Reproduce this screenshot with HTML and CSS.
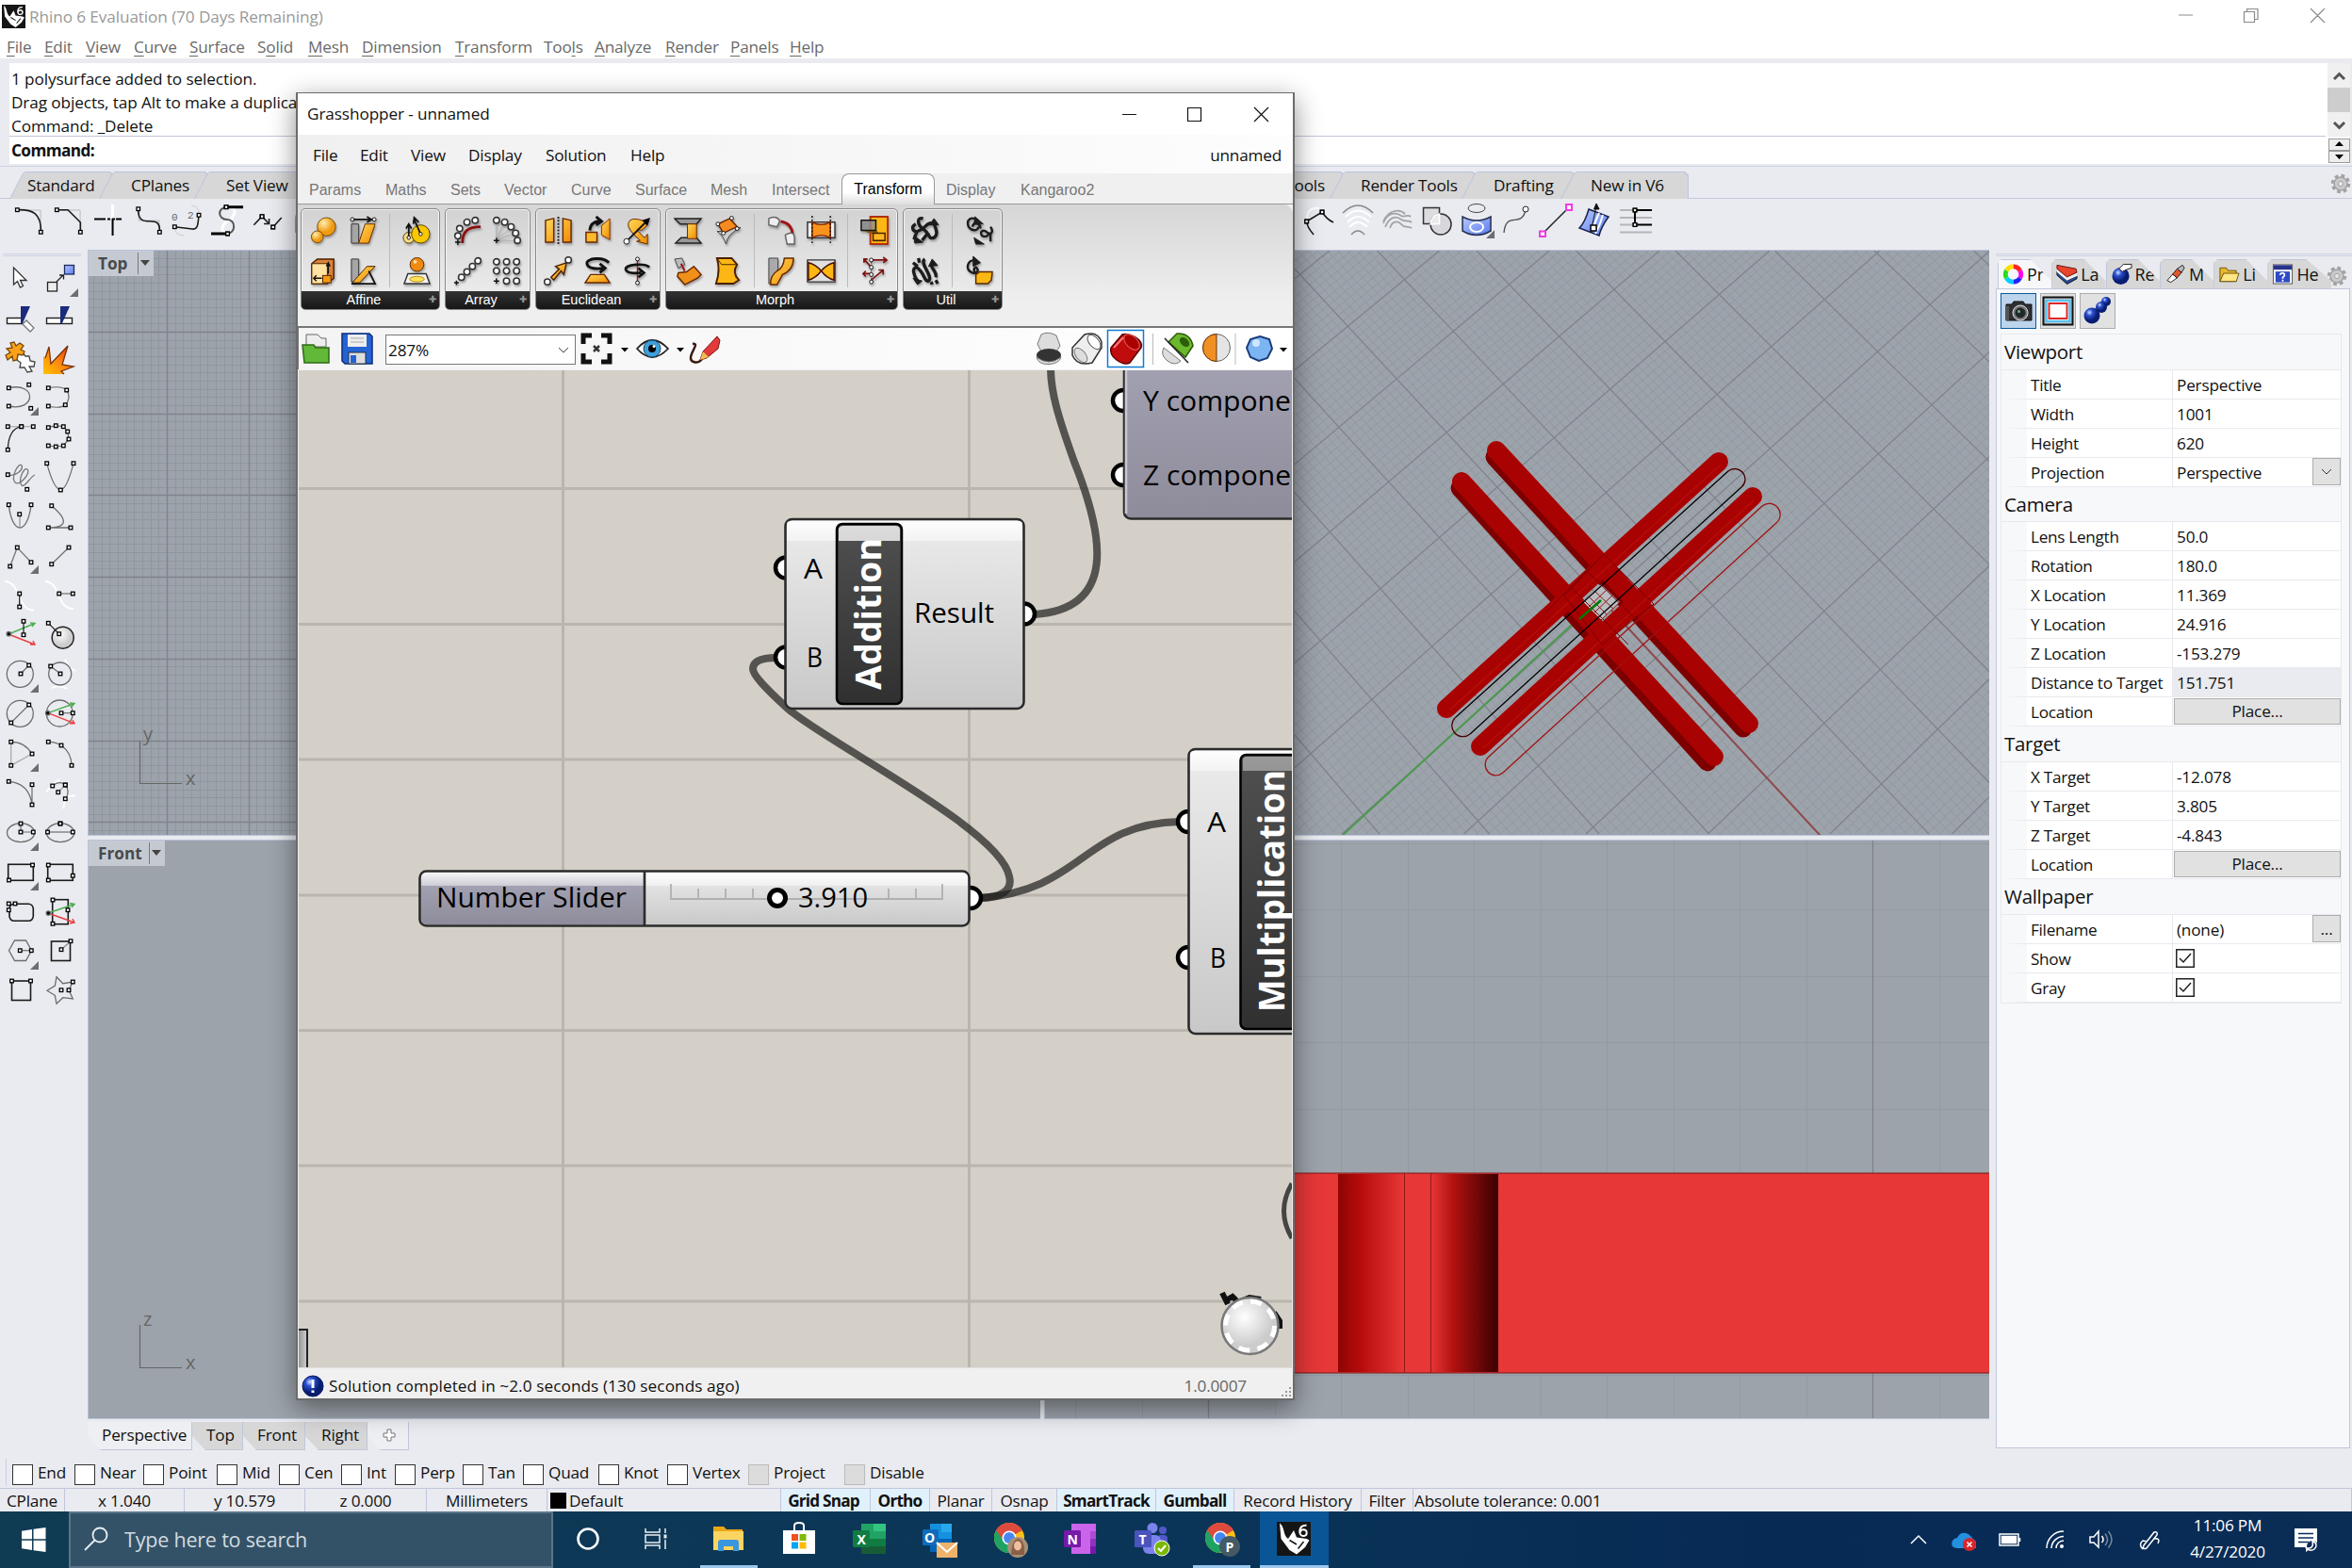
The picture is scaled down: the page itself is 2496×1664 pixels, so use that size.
FILE: index.html
```html
<!DOCTYPE html>
<html lang="en">
<head>
<meta charset="utf-8">
<title>Rhino 6 Evaluation</title>
<link rel="stylesheet" href="styles.css">
</head>
<body>
<svg class="defs" width="0" height="0">
  <defs>
    <marker id="n" markerUnits="userSpaceOnUse" markerWidth="6" markerHeight="6" refX="3" refY="3"><rect x="1.2" y="1.2" width="3.6" height="3.6" fill="#fff" stroke="#000" stroke-width="1.3"/></marker>
    <linearGradient id="silver" x2="0" y2="1"><stop offset="0" stop-color="#ececec"/><stop offset="1" stop-color="#c8c8c8"/></linearGradient>
    <linearGradient id="shine" x2="0" y2="1"><stop offset="0" stop-color="#fff" stop-opacity=".9"/><stop offset="1" stop-color="#fff" stop-opacity=".45"/></linearGradient>
    <linearGradient id="shineDark" x2="0" y2="1"><stop offset="0" stop-color="#fff" stop-opacity=".8"/><stop offset="1" stop-color="#fff" stop-opacity=".4"/></linearGradient>
    <linearGradient id="mauve" x2="0" y2="1"><stop offset="0" stop-color="#a9a8b8"/><stop offset="1" stop-color="#8e8c9b"/></linearGradient>
    <linearGradient id="black" x2="0" y2="1"><stop offset="0" stop-color="#505050"/><stop offset="1" stop-color="#303030"/></linearGradient>
    <linearGradient id="steel"><stop offset="0" stop-color="#777"/><stop offset="1" stop-color="#d0d0d0"/></linearGradient>
    <linearGradient id="gold" x2="1" y2="1"><stop offset="0" stop-color="#ffd75a"/><stop offset="1" stop-color="#f08c00"/></linearGradient>
    <radialGradient id="ballO" cx=".35" cy=".3"><stop offset="0" stop-color="#ffeeb0"/><stop offset="1" stop-color="#f09a10"/></radialGradient>
    <radialGradient id="ballB" cx=".35" cy=".3"><stop offset="0" stop-color="#cfe0ff"/><stop offset=".4" stop-color="#2c50d0"/><stop offset="1" stop-color="#081c70"/></radialGradient>
    <radialGradient id="ballW" cx=".4" cy=".35"><stop offset="0" stop-color="#fff"/><stop offset="1" stop-color="#ccc"/></radialGradient>
    <linearGradient id="blueG" x2="1" y2="1"><stop offset="0" stop-color="#b6c8ff"/><stop offset="1" stop-color="#5c7cec"/></linearGradient>
    <linearGradient id="fire" x1="1" y1="0" x2="0" y2="1"><stop offset="0" stop-color="#e02000"/><stop offset=".5" stop-color="#ff8410"/><stop offset="1" stop-color="#ffc400"/></linearGradient>
    <linearGradient id="cylA"><stop offset="0" stop-color="#8e0404"/><stop offset=".35" stop-color="#b80c0c"/><stop offset="1" stop-color="#e83737"/></linearGradient>
    <linearGradient id="cylB"><stop offset="0" stop-color="#e83737"/><stop offset=".35" stop-color="#b01010"/><stop offset="1" stop-color="#3a0000"/></linearGradient>
    <symbol id="rhino" viewBox="0 0 24 24"><rect width="24" height="24" fill="#151515"/><path d="M2 1C6 4 4 9 8 12L12 6L14 11L21 12L23 13L20 18L14 23L9 20L3 12Z" fill="#fff"/><path d="M9 13L14 16M15 19L19 14" stroke="#151515" fill="none"/><path d="M21 2.500C15 2 15 10 18.500 10C22 10 22 5.500 18.500 5.500Q17 5.500 16.500 7.500" fill="none" stroke="#fff" stroke-width="1.300"/></symbol>
    <symbol id="fly" viewBox="0 0 42 42"><path d="M40 32V41H31Z" fill="#6e6e72"/></symbol>
    <symbol id="gear" viewBox="0 0 22 22"><circle cx="11" cy="11" r="8.500" fill="none" stroke="#a2a2a4" stroke-width="3.500" stroke-dasharray="3.700 3"/><circle cx="11" cy="11" r="7" fill="#c9c9ca" stroke="#a2a2a4" stroke-width="1.500"/><circle cx="11" cy="11" r="2.500" fill="#eaebf0" stroke="#a2a2a4"/></symbol>
    <symbol id="chrome" viewBox="0 0 36 36"><circle cx="18" cy="18" r="17" fill="#fbc116"/><path d="M18 18L3.300 9.500A17 17 0 0 1 32.700 9.500Z" fill="#dd4b3e"/><path d="M18 18L3.300 9.500A17 17 0 0 0 18 35L25 22Z" fill="#1ea362"/><path d="M3.300 9.500L11 20L18 10H32.700A17 17 0 0 0 3.300 9.500" fill="#dd4b3e"/><circle cx="18" cy="18" r="8" fill="#fff"/><circle cx="18" cy="18" r="6.300" fill="#4688f1"/></symbol>
  </defs>
</svg>

<header class="titlebar">
  <div class="caption">
    <svg class="app" width="25" height="25"><use href="#rhino"/></svg><span>Rhino 6 Evaluation (70 Days Remaining)</span>
    <svg class="winbtns" width="190" height="34" fill="none" stroke="#8b8b8b" stroke-width="1.200"><path d="M6 16H21M75.500 12.500H86.500V23.500H75.500ZM78.500 12.500V9.500H90V20.500H86.500M146 9L161 24M161 9L146 24"/></svg>
  </div>
  <nav class="menu">
    <span><u>F</u>ile</span><span><u>E</u>dit</span><span><u>V</u>iew</span><span><u>C</u>urve</span><span><u>S</u>urface</span><span>S<u>o</u>lid</span><span><u>M</u>esh</span><span><u>D</u>imension</span><span><u>T</u>ransform</span><span>Too<u>l</u>s</span><span><u>A</u>nalyze</span><span><u>R</u>ender</span><span><u>P</u>anels</span><span><u>H</u>elp</span>
  </nav>
</header>

<section class="command">
  <div class="history">1 polysurface added to selection.<br>Drag objects, tap Alt to make a duplicate<br>Command: _Delete</div>
  <div class="prompt">Command:</div>
  <svg class="scroll" width="26" height="107"><rect x="2" width="24" height="78" fill="#f0f0f0"/><rect x="2" y="26" width="24" height="26" fill="#cdcdcd"/><path d="M9 17L14.500 11.500L20 17M9 63L14.500 68.500L20 63" fill="none" stroke="#555" stroke-width="3"/><rect x="3.500" y="80.500" width="22" height="12" fill="#eee" stroke="#999"/><rect x="3.500" y="93.500" width="22" height="12" fill="#eee" stroke="#999"/><path d="M10 88L14.500 83L19 88ZM10 97L14.500 102L19 97Z"/></svg>
</section>

<section class="ribbon">
  <div class="rtabs">
    <span class="rt r1"><b>Standard</b></span><span class="rt r2"><b>CPlanes</b></span><span class="rt r3"><b>Set View</b></span><span class="rfill"></span><span class="rt r4"><b>Mesh Tools</b></span><span class="rt r5"><b>Render Tools</b></span><span class="rt r6"><b>Drafting</b></span><span class="rt r7"><b>New in V6</b></span>
    <svg class="gear" width="22" height="22"><use href="#gear"/></svg>
  </div>
  <div class="rtools">
    <svg viewBox="0 0 42 44"><path d="M9 12H34V35" stroke="#bbb"/><path class="nd k" d="M9.300 11.700C25 11 35 15 34.300 35.300"/></svg>
    <svg viewBox="0 0 42 44"><path d="M9 12H34V35" stroke="#bbb"/><path class="nd ends k" d="M9.300 11.700L21 11.700L34.300 25V35.300"/></svg>
    <svg viewBox="0 0 42 44"><path d="M26.500 6V21" stroke="#fff" stroke-width="3"/><path d="M7 21.500H16M30 21.500H36M26.500 21V39" stroke="#000" stroke-width="2"/><path d="M16 21.500H30" stroke="#000" stroke-width="2" stroke-dasharray="3 2"/></svg>
    <svg viewBox="0 0 42 44"><path d="M12 11V23H34V35" stroke="#bbb"/><path class="nd k" d="M11.700 10.700C11 36 36 12 34.300 35.300"/></svg>
    <svg viewBox="0 0 42 44"><path d="M26 7Q35 8 34 17M8 30Q8 38 18 39" stroke="#ccc"/><path class="nd ends k" d="M8.300 29.700L27 32C33 33 33 27 34 17.300"/><text x="5" y="23">0</text><text x="22" y="21">2</text></svg>
    <svg viewBox="0 0 42 44"><path d="M22 9C35 9 29 18 26 22C14 26 15 37 22 37" stroke="#fff" stroke-width="3"/><path d="M22 9C11 9 12 22 22 22S31 37 22 37" stroke="#555" stroke-width="2"/><path d="M22 8.700H39M5 37H22" stroke="#000" stroke-width="3"/><path class="nd" d="M21 8.700L21 8.700M22.500 37L22.500 37"/></svg>
    <svg viewBox="0 0 42 44"><path class="k" d="M7.300 27.700L16 18.700L23 26"/><path class="k" d="M27.700 30L36.700 20M23.500 21V26.500H18"/><path class="nd" d="M16 18.700L16 18.700M27.700 30L27.700 30"/></svg>
    <svg viewBox="0 0 42 44"><path d="M10 36V22C10 14 14 10 22 10" stroke="#999" stroke-width="2"/></svg>
    <i class="rgap"></i>
    <svg viewBox="0 0 42 44"><path d="M9 24Q8 8 22 10" stroke="#fff" stroke-width="2"/><path class="k" d="M16 38Q9 30 8.600 24L25 14Q30 22 37 25"/><path class="nd" d="M8.600 24L8.600 24M25 14L25 14"/></svg>
    <svg viewBox="0 0 42 44"><path d="M8 19Q21 6 35 19M10 25Q21 13 33 25M12 30Q21 20 31 30" stroke="#fff" stroke-width="2"/><path d="M5 15Q21 -1 37 15M14 38Q21 30 28 38" stroke="#888" stroke-width="1.600"/></svg>
    <svg viewBox="0 0 42 44"><path d="M6 26C10 14 20 14 25 18C29 20 32 16 35 19M8 30C12 20 19 17 25 22C29 25 33 22 36 25M13 31C15 24 21 22 26 28C30 31 33 29 36 31M6 24C11 12 23 10 29 16" stroke="#a3a3a5" stroke-width="1.800"/></svg>
    <svg viewBox="0 0 42 44"><rect x="6.500" y="9.500" width="17" height="17" fill="#dcdce0" stroke="#333" stroke-width="1.500"/><circle cx="25" cy="27" r="11" fill="#d8d8dc" stroke="#333" stroke-width="1.500"/><path d="M14 27A11 11 0 0 1 23.500 16V26.500Z" fill="#eceaea" stroke="#fff" stroke-width="1.500"/></svg>
    <svg viewBox="0 0 42 44"><ellipse cx="21" cy="10" rx="9" ry="4.500" stroke="#444"/><path d="M6 19Q21 27 36 19V34Q21 43 6 34Z" fill="url(#blueG)" stroke="#24304f" stroke-width="1.500"/><ellipse cx="21" cy="30" rx="7" ry="5" stroke="#fff" stroke-width="2"/><path d="M40 33V42H31Z" fill="#6e6e72"/></svg>
    <svg viewBox="0 0 42 44"><path d="M8 36C10 12 26 32 31 12" stroke="#555" stroke-width="1.400"/><circle cx="31" cy="11" r="3" fill="#fff" stroke="#222"/></svg>
    <svg viewBox="0 0 42 44"><path d="M7 37L35 9" stroke="#222" stroke-width="1.500"/><path d="M4 34.500H10V40H4ZM32 6H38V12H32Z" fill="#fff" stroke="#f038e8" stroke-width="2"/></svg>
    <svg viewBox="0 0 42 44"><path d="M14 11L35 19Q27 30 25 39L4 31Q10 25 14 11Z" fill="url(#blueG)" stroke="#161e4a" stroke-width="1.500"/><path d="M25 15Q20 26 18 34M29 17Q26 28 21 37" stroke="#fff" stroke-width="2"/><path d="M22 8L17 31M22 5L19.500 11H25Z" stroke="#111" fill="#111"/><rect x="16" y="28" width="6" height="6" fill="#fff" stroke="#000" stroke-width="1.500"/></svg>
    <svg viewBox="0 0 42 44"><path d="M4 12H20M4 20H38M4 27.500H20M4 35.500H38" stroke="#b5b5b8" stroke-width="2"/><path d="M38 12H20V27.500H38" stroke="#000" stroke-width="2"/><path class="nd" d="M20 12L20 12M20 27.500L20 27.500"/></svg>
  </div>
</section>

<main class="work">
  <aside class="tools">
    <svg viewBox="0 0 42 42"><path d="M13.500 10V28L17.500 24.500L20.500 31L23.500 29.500L20.500 23.500H27Z" fill="#fff" stroke="#333" stroke-width="1.300"/></svg>
    <svg viewBox="0 0 42 42"><rect x="7.500" y="25.500" width="10" height="9.500" fill="#eee" stroke="#222"/><rect x="25.500" y="7.500" width="10" height="9.500" fill="url(#blueG)" stroke="#1c2c60"/><path d="M17 25L24 18M20 18H24.500V22.500" stroke="#222"/><use href="#fly"/></svg>
    <svg viewBox="0 0 42 42"><rect x="6.500" y="21.500" width="16" height="6" fill="#fff" stroke="#222" stroke-width="1.400"/><path d="M27 24L35 32L31 36L23 28Z" fill="#fff" stroke="#777"/><path d="M21 9H31L23 27H21Z" fill="#1a2a7c" stroke="none"/></svg>
    <svg viewBox="0 0 42 42"><rect x="6.500" y="21.500" width="27" height="6" fill="#fff" stroke="#222" stroke-width="1.400"/><path d="M21 9H31L23 27H21Z" fill="#1a2a7c" stroke="none"/></svg>
    <svg viewBox="0 0 42 42"><path d="M18 18L23 16L26 20L30 20L31 25L36 26L35 31L30 31L33 36L28 37L25 32L20 32L21 27L17 24Z" fill="#fff" stroke="#444" stroke-width="1.300"/><path d="M10 6L14 5L16 9L20 6L24 9L21 13L25 15L23 19L18 18L17 24L13 25L12 20L7 24L5 19L10 16L6 12L12 11Z" fill="#f9a21a" stroke="#7a4a08" stroke-width="1.300"/></svg>
    <svg viewBox="0 0 42 42"><path d="M3 39V20L5 22L9 10L11 28L29 9L23 29L35 31L22 36L25 39Z" fill="url(#fire)" stroke="none"/><path d="M5 22L9 10L11 28L29 9L23 29L35 31L22 36L25 39" stroke="#7a3210"/></svg>
    <svg viewBox="0 0 42 42"><path d="M8.300 11.700C38 5 38 37 8.300 31"/><path class="nd o" d="M8.300 11.700L29.700 8.300L31.700 33.300L8.300 31"/><use href="#fly"/></svg>
    <svg viewBox="0 0 42 42"><path class="nd" d="M8.300 11.700Q22 9 27.700 14Q33 22 26.300 29.700Q21 34 8.300 31"/></svg>
    <svg viewBox="0 0 42 42"><path class="nd" d="M7.300 10.700L21.700 10.700L34.300 10.700" stroke="#aaa"/><path class="nd k" d="M7.300 35.300Q8 13 21.700 10.700"/></svg>
    <svg viewBox="0 0 42 42"><path class="nd" d="M8.300 11.700L16.300 9.700L24.300 10.700L28.700 16L30 24L24.300 31L16.300 32L8.300 31"/></svg>
    <svg viewBox="0 0 42 42"><path d="M8 20C16 22 24 14 22 10C19 6 10 22 15 28C20 32 32 18 28 14C24 11 18 26 22 31C25 34 31 22 36 20" stroke="#777"/><path class="nd o" d="M7.300 19.700L27.700 35.300"/></svg>
    <svg viewBox="0 0 42 42"><path class="nd" d="M6.700 7.700Q14 35 21.300 36Q28 35 35 7.700"/></svg>
    <svg viewBox="0 0 42 42"><path d="M8.300 10C12 42 28 42 32 10"/><path d="M20 20V35" stroke="#999"/><path class="nd o" d="M8.300 9.700L32 9.700L19.700 19.700"/></svg>
    <svg viewBox="0 0 42 42"><path d="M11.700 10.700C30 26 28 34 8.300 34H32"/><path class="nd o" d="M11.700 10.700L8.300 34L32 34"/></svg>
    <svg viewBox="0 0 42 42"><path class="nd" d="M9.700 33L17.300 13L32 28.700"/><use href="#fly"/></svg>
    <svg viewBox="0 0 42 42"><path class="nd" d="M11.700 30.700L30 13"/></svg>
    <svg viewBox="0 0 42 42"><path d="M4 7C22 8 16 37 35 37.700" stroke="#fff" stroke-width="2"/><path class="nd k" d="M19.700 20V34"/></svg>
    <svg viewBox="0 0 42 42"><path d="M5 7C22 8 16 36 35 36" stroke="#fff" stroke-width="2"/><path class="nd" d="M19.700 20H34.300"/></svg>
    <svg viewBox="0 0 42 42"><path class="g" d="M8 21L36 9.500M31 9L36 9.500L33 13"/><path class="r" d="M8 21L36 32M31 32L36 32L34 28"/><circle cx="8.300" cy="20.700" r="2.200" fill="#000"/><path class="nd k" d="M24 7.300V21.700"/></svg>
    <svg viewBox="0 0 42 42"><circle cx="23.700" cy="24.700" r="11.500" fill="url(#ballW)" stroke="#222" stroke-width="1.500"/><path class="nd k" d="M8.300 9.300L19.700 20.700"/></svg>
    <svg viewBox="0 0 42 42"><circle cx="20.300" cy="21.300" r="14"/><path class="nd" d="M21 21L29.700 12"/><use href="#fly"/></svg>
    <svg viewBox="0 0 42 42"><path d="M26 6L30 14L37 18M12 36Q20 32 28 37" stroke="#fff" stroke-width="2"/><circle cx="20.700" cy="21" r="12"/><path class="nd" d="M21 21L10.700 13"/></svg>
    <svg viewBox="0 0 42 42"><circle cx="20.300" cy="21.300" r="14"/><path class="nd" d="M10.700 31L29.700 12"/></svg>
    <svg viewBox="0 0 42 42"><circle cx="20.300" cy="21" r="14"/><path class="g" d="M8 20.700L36 10.500M31 10L36 10.500L33 14"/><path class="r" d="M8 20.700L36 31.700M31 32L36 31.700L34 28"/><circle cx="7.700" cy="20.700" r="2.200" fill="#000"/><path class="nd" d="M22 20.700H34.300"/></svg>
    <svg viewBox="0 0 42 42"><path d="M10.700 9.300V34.300L33 22" stroke="#aaa"/><path d="M10.700 9.300Q25 9 33 22"/><path class="nd o" d="M10.700 9.300L33 22L10.700 34.300"/><use href="#fly"/></svg>
    <svg viewBox="0 0 42 42"><path class="nd" d="M8.300 9.300Q16 9 22 13Q33 21 33 34.300"/></svg>
    <svg viewBox="0 0 42 42"><path class="nd" d="M8.300 9.300Q30 11 33 34V12.700"/></svg>
    <svg viewBox="0 0 42 42"><path d="M6 20L20 7M24 38L27 26L37 24" stroke="#fff" stroke-width="2"/><path class="nd" d="M12.700 14Q20 8 26.300 13Q32 20 26.300 27.700"/><path class="nd" d="M26.300 13L18.700 20.700" stroke="#999"/></svg>
    <svg viewBox="0 0 42 42"><ellipse cx="21" cy="21.700" rx="14.500" ry="10"/><path class="nd" d="M21 12V21L34.300 21"/><use href="#fly"/></svg>
    <svg viewBox="0 0 42 42"><ellipse cx="21" cy="21.700" rx="14.500" ry="10"/><path class="nd" d="M7.500 21H34.300"/><path class="nd" d="M21 12L21 12"/></svg>
    <svg viewBox="0 0 42 42"><rect class="k" x="7.700" y="13.300" width="26.600" height="17"/><path class="nd o" d="M33.500 14L8.500 30"/><use href="#fly"/></svg>
    <svg viewBox="0 0 42 42"><rect class="k" x="7.700" y="13.300" width="26.600" height="17"/><path class="nd o" d="M8.300 14V30L34.300 25.300"/></svg>
    <svg viewBox="0 0 42 42"><rect class="k" x="9" y="13.300" width="25.300" height="18" rx="5"/><path class="nd o" d="M15 13L8.300 13L8.300 19.700"/></svg>
    <svg viewBox="0 0 42 42"><rect class="k" x="12.700" y="8.700" width="16.600" height="26"/><path class="g" d="M8 23L36 13.500M31 12.500L36 13.500L33 17"/><path class="r" d="M8 23L36 33M31 34L36 33L34 29"/><circle cx="8.300" cy="23" r="2.200" fill="#000"/><path class="nd o" d="M13 9L29 19.700L13 34.300"/></svg>
    <svg viewBox="0 0 42 42"><path d="M8.500 20.700L14.500 10H26.500L32.500 20.700L26.500 31.500H14.500Z"/><path class="nd" d="M20.300 20.700H32.300"/><use href="#fly"/></svg>
    <svg viewBox="0 0 42 42"><rect class="k" x="11.500" y="11" width="20" height="20.500"/><path class="nd" d="M22 19.700L32 10.700" stroke="#888"/></svg>
    <svg viewBox="0 0 42 42"><rect class="k" x="11.500" y="11" width="20" height="20.500"/><path class="nd o" d="M11.500 11H31.500"/></svg>
    <svg viewBox="0 0 42 42"><path d="M7 21.300L15.300 16L17 6.700L23.700 13.700L34.300 12L30 20.700L34.300 30L23.700 28.700L17 35.300L15.300 26.300Z"/><path class="nd o" d="M22 20.700L30 20.700L34.300 12"/></svg>
  </aside>

  <div class="center">
    <div class="views">
      <section class="view">
        <svg width="1010" height="621"><path class="mn" id="topMinor"/><path class="mj" id="topMajor"/><path d="M54.500 520V565.500H99" class="ax"/><text class="axt" x="58" y="520">y</text><text class="axt" x="103" y="567">x</text></svg>
        <div class="vlabel">Top<i></i></div>
      </section>
      <section class="view world">
        <svg viewBox="1108 266 1003 621" width="1003" height="621">
          <path class="mn p" id="perMinor"/><path class="mj" id="perMajor"/>
          <path d="M1424 887L1680 652" stroke="#4a9a4a" stroke-width="2"/><path d="M1932 887L1705 642" stroke="#8f4a4d" stroke-width="2"/>
          <g stroke-linecap="round" fill="none">
            <g stroke="#7d0000" stroke-width="19"><path d="M1586 485L1850 773"/><path d="M1549 518L1812 809"/></g>
            <g stroke="#a90202" stroke-width="20"><path d="M1588 478L1856 768"/><path d="M1551 511L1819 803"/><path d="M1824 490L1535 752"/><path d="M1860 527L1571 792"/></g>
            <path d="M1825 494L1539 753M1861 531L1575 793" stroke="#c0140e" stroke-width="2" opacity=".5"/>
          </g>
          <path d="M1699 620L1719 639L1699 658L1680 639Z" fill="#b9bcc0"/>
          <path d="M1680 639L1699 658M1686 633L1705 652M1692 627L1712 646M1719 639L1699 658M1711 632L1692 650M1705 626L1686 644" stroke="#8e1515"/>
          <path d="M1660 632L1702 588L1755 641L1700 684ZM1668 624L1728 684M1684 606L1745 666M1693 597L1640 650" stroke="#7d0000" fill="none"/>
          <path d="M1834 500L1545 761M1848 517L1560 779" stroke="#000" stroke-width="1.300"/><path d="M1834 500A10.500 10.500 0 0 1 1848 517M1545 761A10.500 10.500 0 0 0 1560 779" fill="none" stroke="#400" stroke-width="1.300"/>
          <path d="M1870 537L1580 803A10.500 10.500 0 0 0 1595 820L1885 555A10.500 10.500 0 0 0 1870 537Z" fill="none" stroke="#a01010" stroke-width="1.300"/>
          <path d="M1676 657L1699 637" stroke="#007800" stroke-width="2.500"/>
        </svg>
      </section>
      <section class="view"><div class="vlabel front">Front<i></i></div>
        <svg width="1010" height="614"><path d="M54.500 514V559.500H99" class="ax"/><text class="axt" x="58" y="515">z</text><text class="axt" x="103" y="561">x</text></svg>
      </section>
      <section class="view world">
        <svg viewBox="1108 892 1003 614" width="1003" height="614">
          <path class="mn f" id="frMinor"/><path class="mj" id="frMajor"/>
          <rect x="1300" y="1245" width="815" height="212" fill="#e83737" stroke="#7a1414"/>
          <rect x="1420" y="1246" width="70" height="210" fill="url(#cylA)"/><rect x="1518" y="1246" width="72" height="210" fill="url(#cylB)"/>
          <path d="M1490.500 1245V1457M1518.500 1245V1457" stroke="#901818"/>
        </svg>
      </section>
    </div>
    <div class="vtabs"><span class="v1 on">Perspective</span><span class="v2">Top</span><span class="v3">Front</span><span class="v4">Right</span><span class="v5 on"><svg width="14" height="14"><path d="M5 1H9V5H13V9H9V13H5V9H1V5H5Z" fill="#fff" stroke="#777"/></svg></span></div>
  </div>

  <aside class="panel">
    <div class="ptabs">
      <span class="on"><svg viewBox="0 0 24 24"><g fill="none" stroke-width="5"><path d="M12 3.500A8.500 8.500 0 0 1 19.400 7.800" stroke="#f22"/><path d="M19.400 7.800A8.500 8.500 0 0 1 19.400 16.300" stroke="#f0e" /><path d="M19.400 16.300A8.500 8.500 0 0 1 12 20.500" stroke="#22f"/><path d="M12 20.500A8.500 8.500 0 0 1 4.600 16.300" stroke="#0cf"/><path d="M4.600 16.300A8.500 8.500 0 0 1 4.600 7.800" stroke="#2d2"/><path d="M4.600 7.800A8.500 8.500 0 0 1 12 3.500" stroke="#fd0"/></g></svg>Pr</span>
      <span><svg viewBox="0 0 24 24"><path d="M1 9L12 19L23 14V17L12 23L1 13Z" fill="#234a9c" stroke="#111"/><path d="M1 6L12 15L23 11V14L12 19L1 10Z" fill="#eee"/><path d="M1 2L22 6L23 10L12 15L1 6Z" fill="#e8452c" stroke="#611"/></svg>La</span>
      <span><svg viewBox="0 0 24 24"><circle cx="11" cy="14" r="9.500" fill="url(#ballB)"/><path d="M9 6L14 1H23V5L17 7L13 9Z" fill="#fff" stroke="#222"/></svg>Re</span>
      <span><svg viewBox="0 0 24 24"><path d="M3 19L9 12L14 16L7 21Z" fill="#fff" stroke="#222"/><path d="M9 12L14 6L19 10L14 16Z" fill="#e4572c" stroke="#222"/><path d="M14 6L20 2L22 5L19 10Z" fill="#bbb" stroke="#222"/></svg>M</span>
      <span><svg viewBox="0 0 24 24"><path d="M2 20V5H9L11 8H20V20Z" fill="#e8b928" stroke="#6b5210"/><path d="M2 20L6 11H23L20 20Z" fill="#ffe784" stroke="#6b5210"/></svg>Li</span>
      <span><svg viewBox="0 0 24 24"><rect x="1.500" y="1.500" width="21" height="21" fill="#fff" stroke="#555"/><rect x="2" y="2" width="20" height="5" fill="#26348c"/><rect x="4" y="9" width="16" height="12" fill="#2d4bc4"/><path d="M9 13Q9.500 10 13 11Q15.500 13 12 15.500V17M12 18V20" stroke="#fff" stroke-width="1.800" fill="none"/></svg>He</span>
      <svg class="gear" width="22" height="22"><use href="#gear"/></svg>
    </div>
    <div class="pbody">
      <div class="picons">
        <span class="sel"><svg viewBox="0 0 34 34"><path d="M4 10H10L12 7H22L24 10H31V27H4Z" fill="#2c2f33" stroke="#111"/><path d="M3 12H7V27H3Z" fill="#555"/><circle cx="19" cy="19" r="8" fill="#777" stroke="#ddd"/><circle cx="19" cy="19" r="5" fill="#1c2a2c" stroke="#222"/><circle cx="17.500" cy="17.500" r="1.500" fill="#7fb27f"/></svg></span>
        <span><svg viewBox="0 0 34 34"><rect x="1.500" y="2.500" width="31" height="29" fill="#ccc" stroke="#111" stroke-width="2"/><rect x="4.500" y="6" width="25" height="22" fill="#fff" stroke="#5cc0ee" stroke-width="2.500"/><rect x="7.500" y="9" width="19" height="16" fill="#fff" stroke="#e02828" stroke-width="2"/></svg></span>
        <span><svg viewBox="0 0 34 34"><circle cx="26" cy="7" r="5" fill="url(#ballB)"/><circle cx="21" cy="13" r="6" fill="url(#ballB)"/><circle cx="11" cy="22" r="8.500" fill="url(#ballB)"/></svg></span>
      </div>
      <div class="props">
        <h3>Viewport</h3>
        <dl><dt>Title</dt><dd>Perspective</dd><dt>Width</dt><dd>1001</dd><dt>Height</dt><dd>620</dd><dt>Projection</dt><dd>Perspective<span class="drop"><svg width="14" height="9" fill="none" stroke="#333"><path d="M2 2L7 7L12 2"/></svg></span></dd></dl>
        <h3>Camera</h3>
        <dl><dt>Lens Length</dt><dd>50.0</dd><dt>Rotation</dt><dd>180.0</dd><dt>X Location</dt><dd>11.369</dd><dt>Y Location</dt><dd>24.916</dd><dt>Z Location</dt><dd>-153.279</dd><dt>Distance to Target</dt><dd class="ro">151.751</dd><dt>Location</dt><dd><span class="btn">Place...</span></dd></dl>
        <h3>Target</h3>
        <dl><dt>X Target</dt><dd>-12.078</dd><dt>Y Target</dt><dd>3.805</dd><dt>Z Target</dt><dd>-4.843</dd><dt>Location</dt><dd><span class="btn">Place...</span></dd></dl>
        <h3>Wallpaper</h3>
        <dl><dt>Filename</dt><dd>(none)<span class="drop">...</span></dd><dt>Show</dt><dd><svg class="chk" width="20" height="20"><rect x=".75" y=".75" width="18.500" height="18.500" fill="#fff" stroke="#222" stroke-width="1.500"/><path d="M4 10L8 14L16 5" fill="none" stroke="#222" stroke-width="1.500"/></svg></dd><dt>Gray</dt><dd><svg class="chk" width="20" height="20"><rect x=".75" y=".75" width="18.500" height="18.500" fill="#fff" stroke="#222" stroke-width="1.500"/><path d="M4 10L8 14L16 5" fill="none" stroke="#222" stroke-width="1.500"/></svg></dd></dl>
      </div>
    </div>
  </aside>
</main>

<section class="osnap"><span>End</span><span>Near</span><span>Point</span><span>Mid</span><span>Cen</span><span>Int</span><span>Perp</span><span>Tan</span><span>Quad</span><span>Knot</span><span>Vertex</span><span class="off">Project</span><span class="off">Disable</span></section>

<section class="status"><span>CPlane</span><span>x 1.040</span><span>y 10.579</span><span>z 0.000</span><span>Millimeters</span><span class="layer">Default</span><b>Grid Snap</b><b>Ortho</b><span>Planar</span><span>Osnap</span><b>SmartTrack</b><b>Gumball</b><span>Record History</span><span>Filter</span><span class="last">Absolute tolerance: 0.001</span></section>

<footer class="taskbar">
  <div class="start"><svg width="26" height="26" fill="#fff"><path d="M0 3.700L11 2V12.300H0ZM12.500 1.800L25.500 0V12.300H12.500ZM0 13.700H11V24L0 22.300ZM12.500 13.700H25.500V26L12.500 24.200Z"/></svg></div>
  <div class="search"><svg width="27" height="27" fill="none" stroke="#e8eef2" stroke-width="1.800"><circle cx="17" cy="9" r="7.500"/><path d="M11.500 14.500L1 25"/></svg>Type here to search</div>
  <div class="apps">
    <span><svg viewBox="0 0 36 36"><circle cx="18" cy="18" r="10.500" fill="none" stroke="#fff" stroke-width="2.600"/></svg></span>
    <span><svg viewBox="0 0 36 36" fill="none" stroke="#e8eef2" stroke-width="1.500"><path d="M4 7V11H19V7M4 29V25H19V29M4 14H19V22H4ZM25 7V12M25 19V29"/><path d="M25 13.500V17.500" stroke-width="3"/></svg></span>
    <span class="run"><svg viewBox="0 0 36 36"><path d="M2 5H13L16 8H33V30H2Z" fill="#e9a616"/><path d="M2 10H34V30H2Z" fill="#fcd462"/><path d="M7 31V22Q7 19 10 19H26Q29 19 29 22V31H23V26H13V31Z" fill="#3a96dd"/></svg></span>
    <span><svg viewBox="0 0 36 36"><path d="M13 9V4Q13 1 18 1T23 4V9" fill="none" stroke="#fff" stroke-width="2"/><path d="M1 9H35V34H1Z" fill="#fff"/><path d="M10 13H17V20H10Z" fill="#f25022"/><path d="M18.500 13H25.500V20H18.500Z" fill="#7fba00"/><path d="M10 21.500H17V28.500H10Z" fill="#00a4ef"/><path d="M18.500 21.500H25.500V28.500H18.500Z" fill="#ffb900"/></svg></span>
    <span><svg viewBox="0 0 36 36"><path d="M9 2H35V34H9Z" fill="#21a366"/><path d="M22 2H35V10H22Z" fill="#33c481"/><path d="M9 18H35V26H9Z" fill="#107c41"/><path d="M9 26H35V34H9Z" fill="#185c37"/><rect y="9" width="18" height="18" rx="1.500" fill="#107c41"/><text x="4.500" y="23.500">X</text></svg></span>
    <span><svg viewBox="0 0 36 36"><path d="M8 2H31V30H8Z" fill="#1490df"/><path d="M20 2H31V11H20Z" fill="#28a8ea"/><path d="M8 18H31V32H8Z" fill="#0364b8"/><rect y="8" width="17" height="17" rx="1.500" fill="#0f6cbd"/><text x="2" y="22">O</text><path d="M15 22H37V38H15Z" fill="#edb36a"/><path d="M15 22L26 32L37 22" fill="none" stroke="#fff" stroke-width="2"/></svg></span>
    <span><svg viewBox="0 0 36 36"><use href="#chrome" width="34" height="34"/><circle cx="26" cy="27" r="11" fill="#a89078"/><path d="M19 35Q20 18 27 18Q34 20 33 35Z" fill="#8a5f45"/><ellipse cx="26" cy="25.500" rx="4" ry="5" fill="#edc0a0"/></svg></span>
    <span><svg viewBox="0 0 36 36"><path d="M8 2H34V34H8Z" fill="#ca64ea"/><path d="M28 10H34V18H28Z" fill="#ae4bd5"/><path d="M28 18H34V26H28Z" fill="#9332bf"/><path d="M28 26H34V34H28Z" fill="#7719aa"/><rect y="9" width="18" height="18" rx="1.500" fill="#7719aa"/><text x="3.500" y="23.500">N</text></svg></span>
    <span><svg viewBox="0 0 36 36"><circle cx="19" cy="6.500" r="5.500" fill="#7b83eb"/><circle cx="30" cy="9" r="4" fill="#5059c9"/><rect x="24" y="14" width="11" height="15" rx="4" fill="#5059c9"/><rect x="9" y="14" width="19" height="20" rx="6" fill="#7b83eb"/><rect y="9" width="18" height="18" rx="1.500" fill="#4b53bc"/><text x="4.500" y="23.500">T</text><circle cx="29" cy="28" r="8" fill="#7ab800" stroke="#fff"/><path d="M25 28L28 31L33 25" fill="none" stroke="#fff" stroke-width="2"/></svg></span>
    <span class="run"><svg viewBox="0 0 36 36"><use href="#chrome" width="34" height="34"/><circle cx="27" cy="26" r="11" fill="#455a64"/><text x="22.500" y="31.500">P</text></svg></span>
    <span class="cur"><svg viewBox="0 0 36 36"><use href="#rhino"/></svg></span>
  </div>
  <div class="tray">
    <svg width="450" height="60" fill="none" stroke="#fff" stroke-width="1.500">
      <path d="M8 34L16 26L24 34"/>
      <path d="M57 39Q49 38 52 31Q54 28 57 28Q61 20 69 24L77 32V39Z" fill="#2490e0" stroke="none"/><circle cx="70" cy="35" r="7" fill="#d9252b" stroke="none"/><path d="M67.500 32.500L72.500 37.500M72.500 32.500L67.500 37.500"/>
      <path d="M102 24H122V36H102ZM123.500 28V32"/><path d="M104.500 26.500H119.500V33.500H104.500Z" fill="#fff"/>
      <path d="M152 39A18 18 0 0 1 170 21M157 39A13 13 0 0 1 170 26.500M162 39A8 8 0 0 1 170 31"/><circle cx="168" cy="37" r="2" fill="#fff" stroke="none"/>
      <path d="M198 27H202L207 21V38L202 33H198Z"/><path d="M210.500 26Q213.500 30 210.500 33"/><path d="M214 23.500Q219 30 214 36M217.500 21Q224.500 30 217.500 38.500" stroke="#77889a"/>
      <path d="M255 36L266 22Q270 21 269 25L258 39Q253 41 255 36ZM254 40Q249 35 254 31L259 32M266 29Q273 28 270 34"/>
      <path d="M415 18H439V38H434L427 43V38H415Z" fill="#fff" stroke="none"/><path d="M419 23.500H435M419 28H435M419 32.500H430" stroke="#0a2c58"/><circle cx="434" cy="37" r="6" fill="#0a2c58" stroke="none"/><path d="M434 31Q441 35 436 40Q432 43 428 39Q436 40 434 31Z" fill="none"/>
    </svg>
    <div class="clock">11:06 PM<br>4/27/2020</div>
  </div>
</footer>

<div class="gh">
  <div class="ghtitle">Grasshopper - unnamed<svg width="180" height="44" fill="none" stroke="#111" stroke-width="1.200"><path d="M-1 22.500H14M68.500 15.500H82.500V29.500H68.500ZM139 15L154 30M154 15L139 30"/></svg></div>
  <div class="ghmenu"><span>File</span><span>Edit</span><span>View</span><span>Display</span><span>Solution</span><span>Help</span><em>unnamed</em></div>
  <div class="ghtabs"><span>Params</span><span>Maths</span><span>Sets</span><span>Vector</span><span>Curve</span><span>Surface</span><span>Mesh</span><span>Intersect</span><span class="on">Transform</span><span>Display</span><span>Kangaroo2</span></div>
  <div class="ghribbon">
    <div class="grp g1"><div class="ic">
      <svg viewBox="0 0 32 32"><circle cx="19" cy="12" r="10" fill="url(#ballO)" stroke="#7a4a08"/><circle cx="9" cy="23" r="6.500" fill="url(#ballO)" stroke="#7a4a08"/></svg>
      <svg viewBox="0 0 32 32"><path d="M3 9H11V30H3Z" fill="#a5a5a5" stroke="#333"/><path d="M18 9H29L22 30H11Z" fill="url(#gold)" stroke="#6a2800"/><path d="M5 4H26M20 1L25 4L20 7" stroke="#111" stroke-width="1.800" fill="none"/><circle cx="4" cy="4" r="2" fill="#fff" stroke="#111"/><circle cx="28" cy="4" r="2" fill="#fff" stroke="#111"/></svg>
      <i></i><svg viewBox="0 0 32 32"><circle cx="7" cy="24" r="6" fill="#f4dc88" stroke="#5a4300"/><circle cx="20" cy="20" r="10" fill="#f8c800" stroke="#5a4300"/><path d="M7 24V10M4 14L7 9L10 14M20 20L13 4M12 9L13 2L18 7" stroke="#111" stroke-width="1.800" fill="none"/><circle cx="7" cy="24" r="1.800" fill="#fff" stroke="#111"/><circle cx="20" cy="20" r="1.800" fill="#fff" stroke="#111"/></svg>
      <svg viewBox="0 0 32 32"><path d="M3 8L9 3H27V24L20 30H3Z" fill="#d9823a" stroke="#4a2000" stroke-width="1.500"/><path d="M3 8H20V30H3Z" fill="#ffe3a0" stroke="#4a2000"/><rect x="15" y="21" width="9" height="8" fill="#f59a10" stroke="#4a2000"/><path d="M21 19V8M14 24H5M8 21L5 24L8 27M19 11L21 7L23 11" stroke="#111" stroke-width="1.500" fill="none"/></svg>
      <svg viewBox="0 0 32 32"><path d="M3 3H11V28H3Z" fill="#a5a5a5" stroke="#333"/><path d="M20 11H29L12 29H4Z" fill="url(#gold)" stroke="#4a2000"/><path d="M3 30H29L22 16" stroke="#111" stroke-width="1.800" fill="none"/></svg>
      <svg viewBox="0 0 32 32"><path d="M6 19H26L30 30H2Z" fill="#f4f4f4" stroke="#333" stroke-width="1.500"/><ellipse cx="16" cy="25" rx="8" ry="3" fill="#ffe25a" stroke="#b98600"/><circle cx="16" cy="9" r="7.500" fill="#f08a10" stroke="#5a2c00"/><circle cx="14" cy="6" r="2" fill="#ffe2b0"/></svg></div><p>Affine</p></div>
    <div class="grp g2"><div class="ic">
      <svg viewBox="0 0 32 32"><path d="M10 30C10 17 16 12 30 12" stroke="#8c1010" stroke-width="3" fill="none"/><g fill="#fff" stroke="#333" stroke-width="1.600"><circle cx="24" cy="5" r="3.300"/><circle cx="15" cy="7" r="3.300"/><circle cx="7" cy="14" r="3.300"/><circle cx="5" cy="22" r="3.300"/></g><path d="M2 29H8M5 26V32" stroke="#111" stroke-width="1.500"/></svg>
      <svg viewBox="0 0 32 32"><path d="M5 27V10M5 27L12 9M5 27L20 13M5 27L24 19M5 27H24" stroke="#aaa" fill="none"/><g fill="#fff" stroke="#333" stroke-width="1.600"><circle cx="5" cy="5" r="3.300"/><circle cx="14" cy="7" r="3.300"/><circle cx="21" cy="12" r="3.300"/><circle cx="26" cy="19" r="3.300"/><circle cx="28" cy="27" r="3.300"/></g><path d="M2 27H8M5 24V30" stroke="#111" stroke-width="1.500"/></svg>
      <svg viewBox="0 0 32 32"><g fill="#fff" stroke="#333" stroke-width="1.600"><circle cx="27" cy="5" r="3.300"/><circle cx="21" cy="11" r="3.300"/><circle cx="15" cy="17" r="3.300"/><circle cx="9" cy="23" r="3.300"/></g><path d="M1 29H6M3.500 26.500V31.500" stroke="#111" stroke-width="1.500"/></svg>
      <svg viewBox="0 0 32 32"><g fill="#fff" stroke="#333" stroke-width="1.600"><circle cx="5" cy="6" r="3.300"/><circle cx="16" cy="6" r="3.300"/><circle cx="27" cy="6" r="3.300"/><circle cx="5" cy="16" r="3.300"/><circle cx="16" cy="16" r="3.300"/><circle cx="27" cy="16" r="3.300"/><circle cx="16" cy="27" r="3.300"/><circle cx="27" cy="27" r="3.300"/></g><path d="M2 27H8M5 24V30" stroke="#111" stroke-width="1.500"/></svg></div><p>Array</p></div>
    <div class="grp g3"><div class="ic">
      <svg viewBox="0 0 32 32"><path d="M2 5L11 3V29H2ZM30 5L21 3V29H30Z" fill="url(#gold)" stroke="#6a2800" stroke-width="1.500"/><path d="M16 1V31" stroke="#222" stroke-width="2" stroke-dasharray="2 1.500"/></svg>
      <svg viewBox="0 0 32 32"><path d="M3 18H15V29H3Z" fill="#fdbb2c" stroke="#6a2800" stroke-width="1.500"/><path d="M20 11L29 3V26L20 21Z" fill="url(#gold)" stroke="#8a2800"/><path d="M7 16Q8 7 17 6M14 1L20 6L14 10" stroke="#111" stroke-width="3" fill="none"/></svg>
      <svg viewBox="0 0 32 32"><path d="M6 8Q8 0 24 6Q30 10 20 16Q10 12 24 24L27 20V31L15 28L19 27Q4 14 6 8Z" fill="url(#gold)" stroke="#6a2800"/><path d="M4 28L27 5" stroke="#111" stroke-width="2"/><path d="M30 2L21 5L27 11Z"/><circle cx="4" cy="28" r="3" fill="#fff" stroke="#222"/></svg>
      <svg viewBox="0 0 32 32"><path d="M8 23L17 14L13 11L25 7L22 20L19 16L11 26Z" fill="url(#gold)" stroke="#4a2000" stroke-width="1.500"/><circle cx="4" cy="28" r="3.300" fill="#fff" stroke="#333" stroke-width="1.500"/><circle cx="27" cy="4" r="3.300" fill="#fff" stroke="#333" stroke-width="1.500"/></svg>
      <svg viewBox="0 0 32 32"><path d="M8 20H23L29 29H2Z" fill="url(#gold)" stroke="#6a2800" stroke-width="1.500"/><path d="M28 7C22 0 3 2 4 8C5 14 16 14 22 13M18 8L24 13L18 18" stroke="#111" stroke-width="3" fill="none"/></svg>
      <svg viewBox="0 0 32 32"><path d="M16 3V29" stroke="#a01818" stroke-width="1.500"/><path d="M29 12C24 7 3 9 3 14C4 19 12 19 20 18M17 13L23 18L17 23" stroke="#111" stroke-width="2.800" fill="none"/><circle cx="16" cy="3" r="2" fill="#fff" stroke="#111"/><circle cx="16" cy="29" r="2" fill="#fff" stroke="#111"/></svg></div><p>Euclidean</p></div>
    <div class="grp g4"><div class="ic"><i></i><i class="i2"></i>
      <svg viewBox="0 0 32 32"><path d="M1 3H30L25 9H7ZM2 30L8 24H25L30 30Z" fill="#999" stroke="#222" stroke-width="1.500"/><path d="M15 9H25V25H15Z" fill="url(#gold)" stroke="#6a2800"/></svg>
      <svg viewBox="0 0 32 32"><path d="M4 17Q14 18 16 12Q20 14 30 13Q15 20 14 31Q10 20 4 17Z" fill="#ccc" stroke="#444"/><path d="M5 9L18 3L26 12L11 19Z" fill="#f58a20" stroke="#6a2800" stroke-width="1.500"/><g fill="#fff" stroke="#111"><circle cx="5" cy="9" r="2"/><circle cx="20" cy="2.500" r="2"/><circle cx="26" cy="14" r="2"/><circle cx="11" cy="19" r="2"/></g></svg>
      <svg viewBox="0 0 32 32"><path d="M3 3Q12 -1 15 6L12 12L3 10Z" fill="#eee" stroke="#666" stroke-width="1.500"/><path d="M16 6Q28 8 29 20" stroke="#a01414" stroke-width="3" fill="none"/><path d="M21 21Q30 16 31 23V31H23Z" fill="#eee" stroke="#666" stroke-width="1.500"/></svg>
      <svg viewBox="0 0 32 32"><path d="M1 7H31V24H1Z" fill="#eee" stroke="#333" stroke-width="1.500"/><path d="M6 7Q16 12 26 7V24Q16 19 6 24Z" fill="#f8941c" stroke="#8a2800" stroke-width="1.500"/><path d="M6 0V31M26 0V31" stroke="#111" stroke-width="1.500" stroke-dasharray="2 2"/></svg>
      <svg viewBox="0 0 32 32"><path d="M11 1H30V31H11Z" fill="#fcb714" stroke="#b03010" stroke-width="2"/><path d="M4 17L14 20V28L26 28L18 16Z" fill="#8a5a10"/><path d="M1 5H17V16H1Z" fill="#8c8c8c" fill-opacity=".8" stroke="#111" stroke-width="1.500"/><path d="M14 19H27V27H14Z" fill="#ffb820" stroke="#4a2000" stroke-width="1.500"/></svg>
      <svg viewBox="0 0 32 32"><path d="M1 3L9 2L12 9L5 13Z" fill="#bbb" stroke="#444"/><path d="M8 8L12 16" stroke="#a01414" stroke-width="2"/><path d="M5 18L14 17L22 11L30 20L26 24L12 31L4 22Z" fill="#f09018" stroke="#6a2800" stroke-width="1.500"/></svg>
      <svg viewBox="0 0 32 32"><path d="M4 2H20L26 9Q20 18 28 26L22 30H3Q8 15 4 2Z" fill="#fcb714" stroke="#4a2000" stroke-width="2"/><path d="M4 2L9 9H25" stroke="#4a2000" fill="none"/></svg>
      <svg viewBox="0 0 32 32"><path d="M3 2H13V30H3Z" fill="#aaa" stroke="#444"/><path d="M20 2H30Q30 15 18 20L12 31H5Q4 22 12 16Q19 13 20 2Z" fill="url(#gold)" stroke="#6a2800" stroke-width="1.500"/></svg>
      <svg viewBox="0 0 32 32"><path d="M1 4H31V28H1Z" fill="#e0e0e0" stroke="#333" stroke-width="1.500"/><path d="M2 7Q10 9 16 16Q22 9 30 7V26Q22 24 16 16Q10 24 2 26Z" fill="#fcb714" stroke="#4a1000" stroke-width="1.500"/></svg>
      <svg viewBox="0 0 32 32"><path d="M13 4H29M25 1L29 4L25 7M11 11L4 3M4 7V3H8M11 19H3M6 16L3 19L6 22M12 26L25 15M20 15H25V20" stroke="#7e1212" stroke-width="1.700" fill="none"/><path d="M12 6V26" stroke="#444" stroke-dasharray="2 1"/><g fill="#fff" stroke="#111"><circle cx="12" cy="4" r="2"/><circle cx="12" cy="12" r="2"/><circle cx="12" cy="20" r="2"/><circle cx="12" cy="28" r="2"/></g></svg></div><p>Morph</p></div>
    <div class="grp g5"><div class="ic"><i></i>
      <svg viewBox="0 0 32 32" class="sq"><path d="M14 3C7 1 7 10 15 15C22 20 19 26 26 24C32 20 27 12 25 6M6 9C0 12 3 18 8 17C16 15 17 8 23 8M7 18L4 26M13 27L20 18"/><path d="M21 10L26 3L31 10Z"/><path d="M4 22L14 29L5 30Z"/></svg>
      <svg viewBox="0 0 32 32" class="sq thin"><path d="M14 5C7 0 1 4 4 12C8 18 16 16 14 12M8 12C10 6 17 8 17 14M28 12C32 18 28 22 24 18C20 14 15 18 19 22C26 24 26 20 25 18M28 18V28"/><path d="M11 1L20 9H10ZM10 24L21 31H12Z"/></svg>
      <svg viewBox="0 0 32 32" class="sq"><path d="M16 3C9 7 26 22 20 27C15 28 16 18 7 12C1 12 4 22 8 27M24 8C20 12 30 16 28 23M3 7L8 11M9 2L10 7M28 26L30 30M23 28L24 31"/><path d="M20 11L24 3L30 10Z"/><path d="M3 24L13 27L8 31Z"/></svg>
      <svg viewBox="0 0 32 32" class="sq thin"><path d="M12 4C2 4 0 14 8 18C14 20 16 14 12 12C8 14 10 18 15 21"/><path d="M9 0L17 7L9 11Z"/><path class="box" d="M12 20L16 17H30L29 26L25 30H12Z"/></svg></div><p>Util</p></div>
  </div>
  <div class="ghbar">
    <svg width="86" height="42"><path d="M8 19V6H20L24 10H29V19Z" fill="#eee" stroke="#666"/><path d="M4 17H16L18 20H32V36H6Z" fill="#62b838" stroke="#2c6a14" stroke-width="1.500"/><path d="M46 5H75L78 8V37H49L46 34Z" fill="#2463d4" stroke="#0c2c7c" stroke-width="1.500"/><rect x="52" y="6" width="20" height="13" fill="#eee"/><path d="M55 10H69M55 14H69" stroke="#aaa"/><rect x="53" y="25" width="18" height="12" fill="#ddd" stroke="#234"/><rect x="55" y="28" width="6" height="8" fill="#2463d4"/></svg>
    <div class="combo">287%<svg width="14" height="9" fill="none" stroke="#444"><path d="M2 2L7 7L12 2"/></svg></div>
    <svg width="170" height="42" class="tb2"><path d="M5 16V7H14M24 7H33V16M33 26V35H24M14 35H5V26" fill="none" stroke="#111" stroke-width="5"/><path d="M16 18L22 24M22 18L16 24" stroke="#333" stroke-width="2.500"/><path d="M45 20H53L49 24.500ZM104 20H112L108 24.500Z"/><path d="M62 21Q78 3 95 21Q78 39 62 21Z" fill="#fff" stroke="#222" stroke-width="1.800"/><circle cx="78" cy="21" r="9" fill="#3fa0d8" stroke="#16486c"/><circle cx="78" cy="21" r="4"/><circle cx="80" cy="18.500" r="1.500" fill="#fff"/><path d="M121 16C131 14 112 31 122 35Q127 37 131 32" fill="none" stroke="#3a1c14" stroke-width="2.500"/><path d="M129 33L132 24L147 8L150 12L148 21L136 31Z" fill="#e23a3a" stroke="#7c1414"/><path d="M129 33L132 24L138 30Z" fill="#e8c050"/></svg>
    <svg width="290" height="42" class="tb3">
      <path d="M24 16L28 6Q35 2 44 7L48 18L44 24H28Z" fill="#ddd" stroke="#777"/><ellipse cx="36" cy="28" rx="13" ry="7" fill="#333"/><path d="M23 30Q25 38 36 37.500T49 30Q36 40 23 30" fill="#ddd" stroke="#777"/>
      <path d="M61 20L74 6Q88 2 92 14V20L82 36Q66 40 61 28Z" fill="#eee" stroke="#333" stroke-width="1.500"/><ellipse cx="84" cy="14" rx="5" ry="9" transform="rotate(-40 84 14)" fill="#fff" stroke="#555"/><ellipse cx="70" cy="28" rx="5" ry="9" transform="rotate(-40 70 28)" fill="#ddd" stroke="#777"/>
      <rect x="98.500" y="1.500" width="38" height="39" fill="#fff" stroke="#0c7cd5" stroke-width="1.500"/><path d="M102 20L114 6Q120 4 128 9T134 20L122 36Q116 39 108 33T102 20Z" fill="#c00c0c" stroke="#5c0000" stroke-width="1.500"/><ellipse cx="124" cy="14" rx="10" ry="6" transform="rotate(45 124 14)" fill="#a00" stroke="#e66"/><path d="M105 20L115 9" stroke="#f77" stroke-width="2"/>
      <path d="M146.500 5V38M234 5V38" stroke="#bbb"/>
      <path d="M158 20L176 34Q170 40 162 34T158 20Z" fill="#ddd" stroke="#777"/><path d="M163 14L172 5Q186 4 189 18L181 30Z" fill="#6ab82c" stroke="#2c5c0c" stroke-width="1.500"/><ellipse cx="180" cy="14" rx="6" ry="4" transform="rotate(45 180 14)" fill="#2c5c0c"/><path d="M159 10L184 36" stroke="#222" stroke-width="1.500"/>
      <circle cx="214" cy="20" r="14.500" fill="#e4e4e4" stroke="#666"/><path d="M214 5.500A14.500 14.500 0 0 0 214 34.500Z" fill="#f09024" stroke="#6a3400"/>
      <path d="M260 8L270 11L273 21L268 31L259 34L250 30L246 20L250 11Z" fill="#7cb6f2" stroke="#1c3c7c" stroke-width="2"/><circle cx="256" cy="15" r="4" fill="#cfe6ff"/><path d="M281 20H289L285 24.500Z"/></svg>
  </div>
  <svg class="canvas" viewBox="317 393 1054 1058" width="1054" height="1058">
    <rect x="317" y="393" width="1054" height="1058" fill="#d4d0c8"/>
    <path d="M597.500 393V1451M1028.500 393V1451M317 518.500H1371M317 662.500H1371M317 806H1371M317 950H1371M317 1093.500H1371M317 1237H1371M317 1381H1371" stroke="#bab6ae" stroke-width="3"/>
    <g class="wire"><path d="M1098 652C1185 646 1172 570 1140 490C1122 440 1115 415 1115 390"/><path d="M1040 953C1062 953 1075 945 1071 930C1062 880 880 790 836 752C812 730 799 716 799 710C799 702 808 698 824 698"/><path d="M1040 953C1150 945 1150 874 1252 872"/></g>
    <path d="M1371 1256Q1354 1285 1371 1314" fill="none" stroke="#444" stroke-width="5"/>
    <g class="port"><circle cx="834" cy="602.500" r="11"/><circle cx="834" cy="697.500" r="11"/><circle cx="1087" cy="651.500" r="11"/><circle cx="1261" cy="872" r="11"/><circle cx="1261" cy="1016" r="11"/><circle cx="1030" cy="953" r="11"/><circle cx="1192" cy="425" r="11"/><circle cx="1192" cy="504" r="11"/></g>
    <g class="node">
      <rect x="833.500" y="551" width="253" height="201" rx="7" fill="url(#silver)"/><path class="sh" d="M835 574V556Q835 553 839 553H1081Q1085 553 1085 556V574Z"/>
      <rect x="1261.500" y="795" width="160" height="302" rx="7" fill="url(#silver)"/><path class="sh" d="M1263 818V800Q1263 797 1267 797H1381V818Z"/>
      <rect x="1193" y="330" width="220" height="220.500" rx="7" fill="url(#mauve)"/><path class="edge" d="M1195 393V545"/>
      <rect x="445.500" y="924.500" width="583" height="58" rx="7" fill="url(#silver)"/><path class="cap" d="M684 926V981H453Q447 981 447 975V932Q447 926 453 926Z"/><path class="sh" d="M447 940V931Q448 926 453 926H1022Q1027 927 1027 931V940Z"/><path d="M684 925V982"/>
    </g>
    <g stroke="#000" stroke-width="2.500" fill="url(#black)"><rect x="888" y="556" width="69" height="191" rx="6"/><rect x="1316.500" y="801" width="69" height="291" rx="6"/></g>
    <path d="M890 574V561Q891 558 895 558H950Q955 558 955 562V574ZM1319 818V806Q1319 803 1323 803H1371V818Z" fill="url(#shineDark)"/>
    <path d="M712 938V954H1000V938M741 954V943M770 954V943M799 954V943M943 954V943M972 954V943" fill="none" stroke="#b0b0b0" stroke-width="1.800"/>
    <circle cx="825" cy="953" r="8.500" fill="#fff" stroke="#000" stroke-width="5"/>
    <g class="ntxt"><text x="853" y="614" textLength="20" lengthAdjust="spacingAndGlyphs">A</text><text x="856" y="708" textLength="17" lengthAdjust="spacingAndGlyphs">B</text><text x="970" y="661" textLength="85" lengthAdjust="spacingAndGlyphs">Result</text><text x="1281" y="883" textLength="20" lengthAdjust="spacingAndGlyphs">A</text><text x="1284" y="1027" textLength="17" lengthAdjust="spacingAndGlyphs">B</text><text x="463" y="963" textLength="202" lengthAdjust="spacingAndGlyphs">Number Slider</text><text x="847" y="963" textLength="74" lengthAdjust="spacingAndGlyphs">3.910</text><text x="1213" y="436" textLength="157" lengthAdjust="spacingAndGlyphs">Y compone</text><text x="1213" y="515" textLength="157" lengthAdjust="spacingAndGlyphs">Z compone</text></g>
    <g class="vtxt"><text transform="translate(935 732) rotate(-90)" textLength="161" lengthAdjust="spacingAndGlyphs">Addition</text><text transform="translate(1363 1074) rotate(-90)" textLength="257" lengthAdjust="spacingAndGlyphs">Multiplication</text></g>
    <path d="M1297 1372L1303 1384M1301 1380L1308 1376L1314 1382L1326 1377L1338 1379M1352 1393L1358 1402V1410" fill="none" stroke="#111" stroke-width="6"/><circle cx="1326.500" cy="1407" r="30" fill="url(#ballW)" stroke="#777" stroke-width="2.500"/><circle cx="1326.500" cy="1407" r="26" fill="none" stroke="#fff" stroke-width="5" stroke-dasharray="12 8.400"/>
    <rect x="312" y="1411" width="14" height="50" fill="url(#steel)" stroke="#222" stroke-width="2"/>
  </svg>
  <div class="ghstatus"><svg width="24" height="24"><circle cx="12" cy="12" r="11" fill="url(#ballB)" stroke="#0a1c60"/><path d="M12 5V14M12 16.500V19" stroke="#fff" stroke-width="3"/></svg><span>Solution completed in ~2.0 seconds (130 seconds ago)</span><em>1.0.0007</em><svg width="14" height="14"><path d="M12 2V4M12 6V8M12 10V12M8 6V8M8 10V12M4 10V12" stroke="#999" stroke-width="2"/></svg></div>
</div>
<script src="script.js"></script>
</body>
</html>
```
FILE: styles.css
```css
* { box-sizing: border-box; }
body { margin: 0; width: 2496px; height: 1664px; overflow: hidden; position: relative; background: #eaebf0; font: 17.2px/25px "Open Sans", "Noto Sans", sans-serif; letter-spacing: -0.2px; color: #111; display: flex; flex-direction: column; }
.defs { position: absolute; }
svg { display: block; flex: none; }
em { font-style: normal; }

.titlebar { height: 62px; background: #fff; flex: none; }
.caption { height: 34px; display: flex; align-items: center; color: #999; letter-spacing: -.1px; }
.app { margin: 0 4px 0 2px; }
.winbtns { margin-left: auto; }
.menu { display: grid; grid-template-columns: 40px 44px 51px 59px 72px 54px 57px 99px 94px 54px 75px 69px 63px 60px; padding: 3px 0 0 7px; color: #6a6a6a; }
.menu u { text-underline-offset: 3px; }

.command { height: 115px; flex: none; padding: 5px 2px 2px 10px; border-bottom: 1px solid #ccd2e4; display: grid; grid-template: 78px 29px / 1fr 26px; position: relative; }
.history { background: #fff; border-bottom: 1px solid #c0c6dc; padding: 4px 2px; overflow: hidden; white-space: nowrap; letter-spacing: -.1px; }
.prompt { background: #fff; grid-column: 1; font-weight: 700; padding: 2px 2px; letter-spacing: -.6px; }
.scroll { grid-area: 1 / 2 / 3 / 3; background: #fff; }

.ribbon { height: 88px; flex: none; }
.rtabs { height: 34px; padding: 5px 0 0 10px; display: flex; border-bottom: 1px solid #c3c8df; position: relative; }
.rt { height: 29px; background: #bcc4de; clip-path: polygon(0 100%, 14px 2px, 17px 0, calc(100% - 4px) 0, 100% 4px, 100% 100%); margin-right: -16px; padding: 1px 1px 0; }
.rt b { display: block; font-weight: 400; height: 100%; background: #d7d7d7; padding: 0 0 0 18px; clip-path: polygon(0 100%, 14px 1px, 16px 0, calc(100% - 4px) 0, 100% 4px, 100% 100%); white-space: nowrap; overflow: hidden; line-height: 28px; }
.r1 { width: 111px; } .r2 { width: 117px; } .r3 { width: 117px; }
.r2 b, .r3 b { padding-left: 33px; } .r4 b { padding-left: 29px; } .r5 b { padding-left: 32px; } .r6 b { padding-left: 33px; } .r7 b { padding-left: 31px; }
.rfill { flex: 0 0 1010px; margin-right: -30px; }
.r4 { width: 140px; } .r5 { width: 156px; } .r6 { width: 121px; } .r7 { width: 136px; }
.rtabs .gear { margin: 2px 1px 0 auto; }
.rtools { display: flex; padding-left: 9px; height: 44px; }
.rtools svg { width: 42.1px; height: 44px; fill: none; }
.rtools text { font: 11px "Liberation Mono", monospace; fill: #666; }
.rgap { width: 1032px; flex: none; }
.nd { marker-start: url(#n); marker-mid: url(#n); marker-end: url(#n); }
.nd.ends { marker-mid: none; }
.k { stroke: #1a1a1a; stroke-width: 1.6; fill: none; }
.nd.o { stroke: none; fill: none; }
.tools .g { stroke: #4caf50; stroke-width: 1.4; } .tools .r { stroke: #e84040; stroke-width: 1.4; }

.work { height: 1280px; flex: none; display: flex; }
.tools { width: 93px; padding: 9px 7px 0 1px; display: grid; grid-template-columns: 42px 42px; grid-auto-rows: 42px; background: linear-gradient(#ccd2e4, #ccd2e4) 3px 4px / 83px 1px no-repeat, linear-gradient(#ccd2e4, #ccd2e4) 3px 6px / 83px 1px no-repeat; }
.tools svg { width: 42px; height: 42px; fill: none; stroke: #6c6c6c; stroke-width: 1.3; }
.tools use { stroke: none; }
.tools .nd { stroke-width: 1.2; }
.tools .k { stroke: #1a1a1a; }
.center { width: 2018px; }
.views { display: grid; grid-template: 622px 615px / 1011px 1003px; gap: 4px; width: 2018px; height: 1241px; }
.view { background: #9ca3ab; border: 1px solid #b9c3d9; border-right: 0; overflow: hidden; position: relative; }
.view svg { position: absolute; left: 0; top: 0; }
.view.world svg { left: -1px; }
.vlabel { position: absolute; z-index: 1; left: 0; top: 0; width: 69px; height: 27px; background: #c5cad2; font-weight: 700; color: #4a4a4a; padding-left: 10px; line-height: 27px; letter-spacing: 0; }
.vlabel.front { width: 81px; }
.vlabel i { position: absolute; right: 3px; top: 2px; height: 23px; width: 14px; border-left: 1px solid #777; }
.vlabel i::after { content: ""; position: absolute; left: 2px; top: 8px; border: 5.5px solid transparent; border-top: 6px solid #444; }
.mn { stroke: #90969e; fill: none; } .mn.p { stroke-width: .6; stroke: #8b9097; } .mn.f { stroke: #949aa2; } .mj { stroke: #81838c; fill: none; stroke-width: 1.3; }
.ax { stroke: #666; fill: none; stroke-width: 1.2; } .axt { font-size: 20px; fill: #666; }
.vtabs { display: flex; padding-top: 3px; }
.vtabs span { height: 30px; background: #d7d7d7; border-right: 1px solid #c0c6dc; border-bottom: 1px solid #c0c6dc; clip-path: polygon(0 0, 100% 0, 100% 100%, 14px 100%, 0 50%); padding-left: 15px; line-height: 27px; }
.vtabs .on { background: #eeeff3; }
.v1 { width: 111px; } .v2 { width: 54px; } .v3 { width: 66px; } .v4 { width: 66px; } .v5 { width: 44px; }
.vtabs .v4 { padding-left: 17px; }
.vtabs svg { margin: 7px 0 0 1px; }

.panel { width: 378px; margin-left: 7px; padding: 10px 2px 2px 0; height: 1274px; display: flex; flex-direction: column; background: linear-gradient(#ccd2e4, #ccd2e4) 0 4px / 100% 1px no-repeat, linear-gradient(#ccd2e4, #ccd2e4) 0 6px / 100% 1px no-repeat; }
.ptabs { height: 31px; display: flex; padding-left: 2px; }
.ptabs span { width: 57.3px; flex: none; display: flex; gap: 3px; font-size: 18px; line-height: 31px; background: #d7d7d7; border-left: 1px solid #c0c6dc; border-top: 1px solid #c0c6dc; clip-path: polygon(0 4px, 4px 0, 60% 0, 100% 75%, 100% 100%, 0 100%); padding-left: 4px; }
.ptabs .on { background: #f7f7fa; }
.ptabs span:nth-child(6) { width: 68px; }
.ptabs span svg { width: 23px; height: 24px; margin-top: 3px; }
.ptabs .gear { margin: 7px 0 0 -5px; }
.pbody { flex: 1; background: #f7f8fa; border: 1px solid #c0c6dc; padding: 4px 8px 0 4px; }
.picons { display: flex; gap: 4px; }
.picons span { width: 38px; height: 38px; border: 1px solid #acacac; background: #e1e1e1; padding: 1px; }
.picons .sel { background: #bcd4ec; border-color: #0a5a9c; }
.picons svg { width: 34px; height: 34px; }
.props { margin-top: 5px; border: 1px solid #e8e9ee; }
.props h3 { margin: 0; height: 36.7px; font: 400 20.5px/36px "Open Sans", sans-serif; padding-left: 3px; letter-spacing: -.3px; }
.props dl { margin: 0; display: grid; grid-template-columns: 181px 1fr; border-top: 1px solid #e8e9ee; }
.props dt, .props dd { margin: 0; height: 31px; line-height: 31px; background: #fff; border-bottom: 1px solid #e8e9ee; white-space: nowrap; position: relative; }
.props dt { border-left: 27px solid #f7f8fa; padding-left: 4px; letter-spacing: -.3px; }
.props dd { border-left: 1px solid #e8e9ee; padding-left: 4px; display: flex; justify-content: space-between; }
.props .ro { background: #eaebf0; }
.btn { flex: 1; margin: 1px 0 1px -3px; background: #e1e1e1; border: 1px solid #adadad; text-align: center; line-height: 26px; }
.drop { width: 30px; height: 29px; background: #e1e1e1; border: 1px solid #adadad; display: flex; align-items: center; justify-content: center; }
.chk { margin: 5px 0 0 -1px; }

.osnap { height: 34px; flex: none; padding-left: 13px; display: grid; grid-template-columns: 66px 73px 78px 66px 66px 57px 72px 64px 80px 73px 86px 102px 80px; line-height: 36px; background: linear-gradient(#c9cee2, #c9cee2) 6px 3px / 1px 29px no-repeat; }
.osnap span { display: flex; gap: 5px; }
.osnap span::before { content: ""; width: 20px; height: 20px; border: 1.5px solid #333; background: #fff; margin-top: 9px; flex: none; }
.osnap .off::before { border-color: #bbb; background: #dcdcdc; }
.status { height: 25px; flex: none; border-top: 1px solid #c0c6dc; display: grid; grid-template-columns: 69px 127px 128px 129px 128px 248px 95px 63px 66px 69px 105px 83px 135px 55px 1fr; text-align: center; line-height: 26px; overflow: hidden; white-space: nowrap; }
.status > * { border-right: 1px solid #c0c6dc; }
.status b { background: #e1f1fb; letter-spacing: -.8px; }
.status b:nth-of-type(1) { padding-right: 4px; }
.status .last { text-align: left; padding-left: 1px; }
.status .layer { text-align: left; display: flex; gap: 3px; padding-left: 3px; }
.layer::before { content: ""; width: 17px; height: 17px; background: #000; margin-top: 4px; }

.taskbar { height: 60px; flex: none; background: linear-gradient(90deg, #103b53, #0b3558 50%, #062a54 75%, #0a2d56); display: flex; color: #fff; }
.start { width: 73px; padding: 17px 0 0 23px; }
.search { width: 514px; background: #345267; border: 2px solid #5b7587; display: flex; align-items: center; gap: 16px; padding: 0 0 2px 14px; color: #d2dbe0; font-size: 21.5px; }
.apps { display: flex; }
.apps span { width: 74.7px; height: 60px; padding: 11px 0 0 19px; }
.apps svg { width: 36px; height: 36px; overflow: visible; }
.apps text { font: 700 14px "Open Sans", sans-serif; fill: #fff; }
.apps .run { background: linear-gradient(#9cc8ee, #9cc8ee) 7px 57px / 61px 3px no-repeat; }
.apps .cur { background: #0a5596; border-bottom: 3px solid #9cc8ee; width: 73px; margin-left: 3px; padding-left: 18px; }
.tray { margin-left: auto; width: 477px; position: relative; border-right: 1px solid #456; margin-right: -1px; }
.clock { position: absolute; left: 289px; width: 110px; top: 1px; text-align: center; line-height: 28px; }

.gh { position: absolute; left: 314px; top: 98px; width: 1060px; height: 1388px; background: #f0f0f0; border: 2px solid #6b6b6b; border-top-width: 1px; box-shadow: 0 8px 26px rgba(0,0,0,.45); display: flex; flex-direction: column; }
.ghtitle { height: 44px; flex: none; background: #fff; display: flex; justify-content: space-between; padding-left: 10px; line-height: 44px; letter-spacing: -.1px; }
.ghtitle svg { overflow: visible; }
.ghmenu { height: 41px; flex: none; display: grid; grid-template-columns: 50px 54px 61px 82px 90px 60px 1fr; padding: 0 12px 0 16px; line-height: 43px; background: linear-gradient(90deg, #f0f0f0, #fdfdfd); }
.ghmenu em { text-align: right; }
.ghtabs { height: 33px; flex: none; display: grid; grid-template-columns: 81px 69px 57px 71px 68px 80px 65px 74px 99px 90px 100px; padding-left: 12px; font: 16px/36px "Liberation Sans", sans-serif; letter-spacing: 0; color: #777; border-bottom: 1px solid #999; }
.ghtabs .on { background: linear-gradient(#fff 60%, #ddd); border: 1px solid #999; border-bottom: 0; border-radius: 8px 8px 0 0; color: #000; line-height: 31px; height: 33px; text-align: center; }
.ghtabs span:nth-child(10) { padding-left: 12px; }
.ghtabs span:nth-child(11) { padding-left: 1px; }
.ghribbon { height: 131px; flex: none; padding: 4px 3px; display: flex; gap: 5px; background: linear-gradient(#d6d6d6, #efefef 80%); border-radius: 0 10px 0 0; border-bottom: 2px solid #777; }
.grp { height: 108px; border: 1px solid #888; border-radius: 5px; background: linear-gradient(#d2d2d2, #f0f0f0); box-shadow: 0 0 0 1px #f4f4f4 inset; overflow: hidden; display: flex; flex-direction: column; }
.ic { height: 87px; display: grid; grid-auto-rows: 43px; padding: 7px 0 0 8px; position: relative; }
.ic svg { width: 31px; height: 31px; filter: drop-shadow(1px 2px 1px rgba(0,0,0,.3)); }
.grp p { margin: 0; flex: 1; background: linear-gradient(#333, #161616); color: #fff; font: 14.5px/18px "Liberation Sans", sans-serif; text-align: center; padding-right: 14px; letter-spacing: 0; position: relative; }
.grp p::after { content: "✚"; color: #999; position: absolute; right: 3px; font-size: 10px; }
.g1 { width: 148px; } .g2 { width: 91px; } .g3 { width: 133px; } .g4 { width: 247px; } .g5 { width: 106px; }
.g1 .ic { grid-template-columns: 42px 57px 32px; } .g2 .ic { grid-template-columns: 41px 32px; } .g3 .ic { grid-template-columns: 42px 42px 32px; } .g4 .ic { grid-template-columns: 42px 56px 43px 57px 32px; } .g5 .ic { grid-template-columns: 58px 32px; padding-left: 7px; }
.ic i { position: absolute; left: 93px; top: 5px; bottom: 4px; border-left: 1px solid #bbb; }
.ic .i2 { left: 192px; } .g5 .ic i { left: 51px; }
.sq { fill: #1c1c1c; stroke: #1c1c1c; stroke-width: 1; } .sq path:first-child { fill: none; stroke-width: 3.5; } .thin path:first-child { stroke-width: 2.5; }
.sq .box { fill: #fcb714; stroke: #5a2800; stroke-width: 1.5; }
.ghbar { height: 44px; flex: none; display: flex; padding-top: 1px; background: linear-gradient(90deg, #f4f4f4, #fff); border-left: 1px solid #777; }
.combo { margin: 6px 0 0 6px; width: 202px; height: 32px; border: 1px solid #777; background: #fff; display: flex; justify-content: space-between; align-items: center; padding: 0 5px 0 2px; }
.tb2 { margin-left: 3px; } .tb3 { margin-left: auto; margin-right: 5px; }
.canvas { margin-left: 1px; margin-top: 1px; }
.wire { fill: none; stroke: #1e1e1c; stroke-opacity: .7; stroke-width: 8; }
.port { fill: #fff; stroke: #000; stroke-width: 4.5; }
.node { stroke: #2b2b2b; stroke-width: 2.6; } .node .sh { stroke: none; fill: url(#shine); } .node .edge { stroke: #c8c6d2; } .node .cap { stroke: none; fill: url(#mauve); }
.ntxt { font-size: 30px; letter-spacing: 0; } .vtxt { font: 700 37px "Open Sans", sans-serif; fill: #fff; letter-spacing: 0; }
.ghstatus { flex: 1; display: flex; align-items: center; gap: 5px; padding: 5px 1px 0 4px; border-top: 1px solid #ddd; }
.ghstatus span { letter-spacing: .08px; }
.ghstatus em { margin-left: auto; margin-right: 29px; color: #666; }
.ghstatus svg:last-child { align-self: end; }
```
FILE: script.js
```javascript
// Construction-plane grids: every tenth line is a major line.
function setPath(id, d) { document.getElementById(id).setAttribute('d', d); }

function squareGrid(minorId, majorId, x0, y0, step, box) {
  let minor = '', major = '';
  for (let i = -200; i < 200; i++) {
    const x = Math.round(x0 + i * step) + 0.5, y = Math.round(y0 + i * step) + 0.5;
    if (x > box[0] && x < box[2]) { const s = `M${x} ${box[1]}V${box[3]}`; i % 10 ? minor += s : major += s; }
    if (y > box[1] && y < box[3]) { const s = `M${box[0]} ${y}H${box[2]}`; i % 10 ? minor += s : major += s; }
  }
  setPath(minorId, minor);
  setPath(majorId, major);
}
squareGrid('topMinor', 'topMajor', 83, 86, 8.67, [0, 0, 1010, 621]);
squareGrid('frMinor', 'frMajor', 1282, 1317.5, 70.5, [1108, 892, 2111, 1506]);

// Perspective grid: both line families converge slightly, so each line
// joins a position on the top edge to one on the bottom edge.
let minor = '', major = '';
for (let i = -200; i < 200; i++) {
  const a = `M${1356 + i * 10.55} 266L${1930.3 + i * 11.66} 885`;
  const b = `M${2111.6 + i * 11.68} 266L${1424 + i * 12.95} 885`;
  if (i % 10) minor += a + b; else major += a + b;
}
setPath('perMinor', minor);
setPath('perMajor', major);
```
